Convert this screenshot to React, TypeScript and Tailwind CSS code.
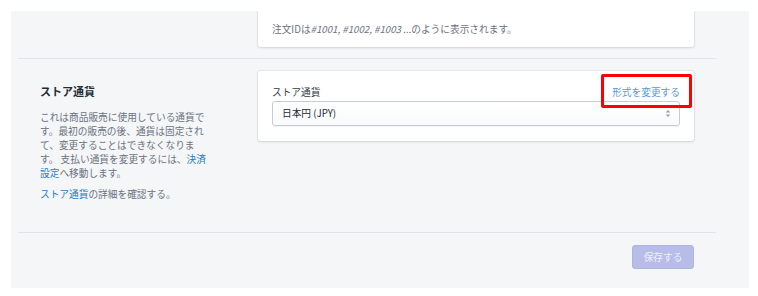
export default function App() {
  return (
    <div className="w-[758px] h-[296px] bg-white pt-[11px] pl-[11px] font-['Noto_Sans_CJK_JP',sans-serif]">
      <div className="w-[738px] h-[277px] bg-[#f4f6f8] overflow-hidden">
        <div className="ml-[7px] w-[698px]">
          {/* Order ID section (cut off at top) */}
          <div className="flex h-[47px] px-[22px]">
            <div className="w-[218px] shrink-0" />
            <div className="flex-1 h-[36px] bg-white rounded-b-[3px] shadow-[0_0_0_1px_rgba(63,63,68,0.05),0_1px_3px_0_rgba(63,63,68,0.15)] flex items-center px-[14px] text-[9.7px] text-[#6b7280]">
              注文IDは<span className="italic">#1001, #1002, #1003 ...</span>のように表示されます。
            </div>
          </div>
          <div className="h-px bg-[#e1e4e8]" />

          {/* Store currency */}
          <div className="flex h-[173px] px-[22px] pt-[12px]">
            <div className="w-[218px] shrink-0 pt-[12px]">
              <h2 className="text-[11px] leading-[16px] font-bold text-[#212b36]">ストア通貨</h2>
              <div className="mt-[11px] text-[9.7px] leading-[14px] text-[#6b7280] whitespace-nowrap">
                <div>これは商品販売に使用している通貨で</div>
                <div>す。最初の販売の後、通貨は固定され</div>
                <div>て、変更することはできなくなりま</div>
                <div>
                  す。 支払い通貨を変更するには、<span className="text-[#1f7bc4]">決済</span>
                </div>
                <div>
                  <span className="text-[#1f7bc4]">設定</span>へ移動します。
                </div>
              </div>
              <p className="mt-[7px] text-[9.7px] leading-[14px] text-[#6b7280]">
                <span className="text-[#1f7bc4]">ストア通貨</span>の詳細を確認する。
              </p>
            </div>
            <div className="flex-1 self-start h-[70px] bg-white rounded-[3px] shadow-[0_0_0_1px_rgba(63,63,68,0.05),0_1px_3px_0_rgba(63,63,68,0.15)] px-[14px] pt-[14px]">
              <div className="flex justify-between items-center h-[14px] text-[9.7px] leading-[14px]">
                <span className="text-[#333a42]">ストア通貨</span>
                <span className="relative text-[#5499da]">
                  形式を変更する
                  <span className="absolute -left-[11px] -right-[12px] -top-[11px] -bottom-[9px] border-[3px] border-[#ff0000] rounded-[2px]" />
                </span>
              </div>
              <div className="mt-[2px] h-[25px] flex items-center justify-between border border-[#c4cdd5] rounded-[3px] bg-gradient-to-b from-white to-[#f9fafb] shadow-[0_1px_0_rgba(22,29,37,0.05)] pl-[9px] pr-[8px]">
                <span className="text-[9.7px] text-[#212b36]">日本円 (JPY)</span>
                <svg width="6" height="9" viewBox="0 0 6 9" className="text-[#919eab]">
                  <path d="M3 1 L5.2 3.4 H0.8 Z" fill="currentColor" />
                  <path d="M3 8 L5.2 5.6 H0.8 Z" fill="currentColor" />
                </svg>
              </div>
            </div>
          </div>
          <div className="h-px bg-[#e1e4e8]" />

          {/* Actions */}
          <div className="flex justify-end px-[22px] pt-[12px]">
            <button
              type="button"
              disabled
              className="w-[62px] h-[24px] rounded-[3px] bg-[#b7bde8] border border-[#aeb4e4] text-[9.7px] text-[#eef0fb]"
            >
              保存する
            </button>
          </div>
        </div>
      </div>
    </div>
  )
}
